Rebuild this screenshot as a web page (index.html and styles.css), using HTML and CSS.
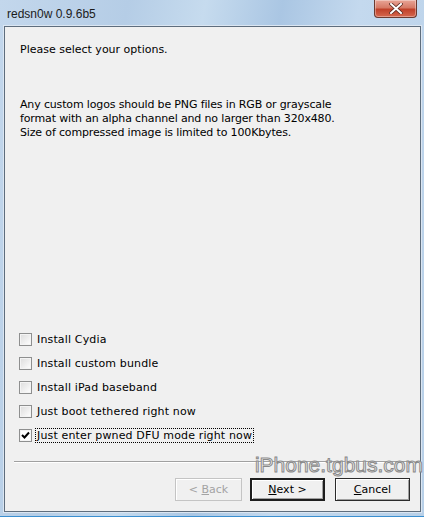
FILE: index.html
```html
<!DOCTYPE html>
<html>
<head>
<meta charset="utf-8">
<link rel="stylesheet" href="styles.css">
</head>
<body>
<div class="window">
  <div class="titlebar">
    <span class="title">redsn0w 0.9.6b5</span>
    <div class="close">
      <svg width="14" height="11" viewBox="0 0 14 11"><path d="M2 1 L12 10 M12 1 L2 10" stroke="#5a2a22" stroke-width="3.6" stroke-linecap="square"/><path d="M2 1 L12 10 M12 1 L2 10" stroke="#fff" stroke-width="2" stroke-linecap="square"/></svg>
    </div>
  </div>
  <div class="client">
    <p class="intro">Please select your options.</p>
    <p class="info">Any custom logos should be PNG files in RGB or grayscale<br>format with an alpha channel and no larger than 320x480.<br>Size of compressed image is limited to 100Kbytes.</p>
    <ul class="options">
      <li><span class="box"></span><span class="label">Install Cydia</span></li>
      <li><span class="box"></span><span class="label">Install custom bundle</span></li>
      <li><span class="box"></span><span class="label">Install iPad baseband</span></li>
      <li><span class="box"></span><span class="label">Just boot tethered right now</span></li>
      <li><span class="box checked"><svg width="9" height="9" viewBox="0 0 9 9"><path d="M1 4 L3.5 6.5 L8 1.5" stroke="#000" stroke-width="2" fill="none"/></svg></span><span class="label focus">Just enter pwned DFU mode right now</span></li>
    </ul>
    <div class="sep"></div>
    <div class="buttons">
      <button class="btn disabled">&lt; <u>B</u>ack</button>
      <button class="btn default"><u>N</u>ext &gt;</button>
      <button class="btn cancel"><u>C</u>ancel</button>
    </div>
    <div class="watermark">iPhone.tgbus.com</div>
  </div>
</div>
</body>
</html>
```

FILE: styles.css
```css
html, body {
  margin: 0;
  padding: 0;
}
body {
  width: 424px;
  height: 517px;
  overflow: hidden;
  font-family: "DejaVu Sans", Verdana, sans-serif;
}
.window {
  width: 424px;
  height: 517px;
  box-sizing: border-box;
  padding: 0 3px 4px 4px;
  background: linear-gradient(100deg, #c3d7ec 0%, #b5cde6 25%, #c6dbee 40%, #aac6e3 55%, #c4d9ee 70%, #b8d0e8 100%);
  border-bottom: 1px solid #3a8fd0;
  display: flex;
  flex-direction: column;
}
.titlebar {
  height: 26px;
  flex: none;
  position: relative;
  display: flex;
  align-items: center;
}
.title {
  font-family: "Liberation Sans", Arial, sans-serif;
  font-size: 12px;
  color: #1b1b1b;
  padding-left: 3px;
  margin-top: 2px;
}
.close {
  position: absolute;
  left: 370px;
  top: 0;
  width: 43px;
  height: 18px;
  box-sizing: border-box;
  border: 1px solid #6b3a30;
  border-top: none;
  border-radius: 0 0 4px 4px;
  background: linear-gradient(#e8a597 0%, #d67a66 45%, #c0412a 55%, #d5684f 100%);
  box-shadow: inset 0 0 0 1px rgba(255,255,255,0.35);
  display: flex;
  align-items: center;
  justify-content: center;
}
.client {
  flex: 1;
  position: relative;
  background: #f0f0f0;
  border: 1px solid #5e6d7d;
  box-shadow: 0 0 0 1px #dbe6f2;
  padding: 16px 10px 0 15px;
  font-size: 11px;
  line-height: 13px;
  color: #000;
  display: flex;
  flex-direction: column;
}
.intro {
  margin: 0;
}
.info {
  margin: 42px 0 0;
  line-height: 14px;
  letter-spacing: -0.15px;
}
.options {
  list-style: none;
  margin: 193px 0 0 -1px;
  padding: 0;
  display: flex;
  flex-direction: column;
  gap: 11px;
}
.options li {
  display: flex;
  align-items: center;
  height: 13px;
}
.box {
  width: 13px;
  height: 13px;
  box-sizing: border-box;
  border: 1px solid #8e8f8f;
  background: linear-gradient(135deg, #dcdcdc, #ffffff);
  box-shadow: inset 0 0 0 1px #f4f4f4;
  display: flex;
  align-items: center;
  justify-content: center;
  flex: none;
}
.box.checked {
  background: #fff;
}
.label {
  margin-left: 3px;
  padding: 0 1px;
  border: 1px dotted transparent;
  letter-spacing: 0.15px;
}
.label.focus {
  border-color: #000;
}
.sep {
  margin: 19px 0 0 -6px;
  width: 398px;
  height: 0;
  border-top: 1px solid #a0a0a0;
  border-bottom: 1px solid #ffffff;
}
.buttons {
  display: flex;
  justify-content: flex-end;
  margin-top: 15px;
}
.btn {
  width: 75px;
  height: 23px;
  box-sizing: border-box;
  font-family: "DejaVu Sans", Verdana, sans-serif;
  font-size: 11px;
  color: #000;
  background: #f0f0f0;
  border: 1px solid #2b2b2b;
  box-shadow: inset 1px 1px 0 #ffffff, inset -1px -1px 0 #a0a0a0;
  padding: 0;
}
.btn.default {
  border: 2px solid #1e1e1e;
  margin-left: 8px;
}
.btn.cancel {
  margin-left: 10px;
}
.btn.disabled {
  width: 67px;
  color: #a3a3a3;
  border-color: #c4c4c4;
  box-shadow: inset 1px 1px 0 #ffffff;
}
.btn u {
  text-decoration: underline;
}
.watermark {
  position: absolute;
  right: -3px;
  top: 426px;
  font-family: "Liberation Sans", Arial, sans-serif;
  font-size: 21px;
  line-height: 24px;
  color: #f4f4f4;
  -webkit-text-stroke: 1px #8a8a8a;
  pointer-events: none;
}
```
